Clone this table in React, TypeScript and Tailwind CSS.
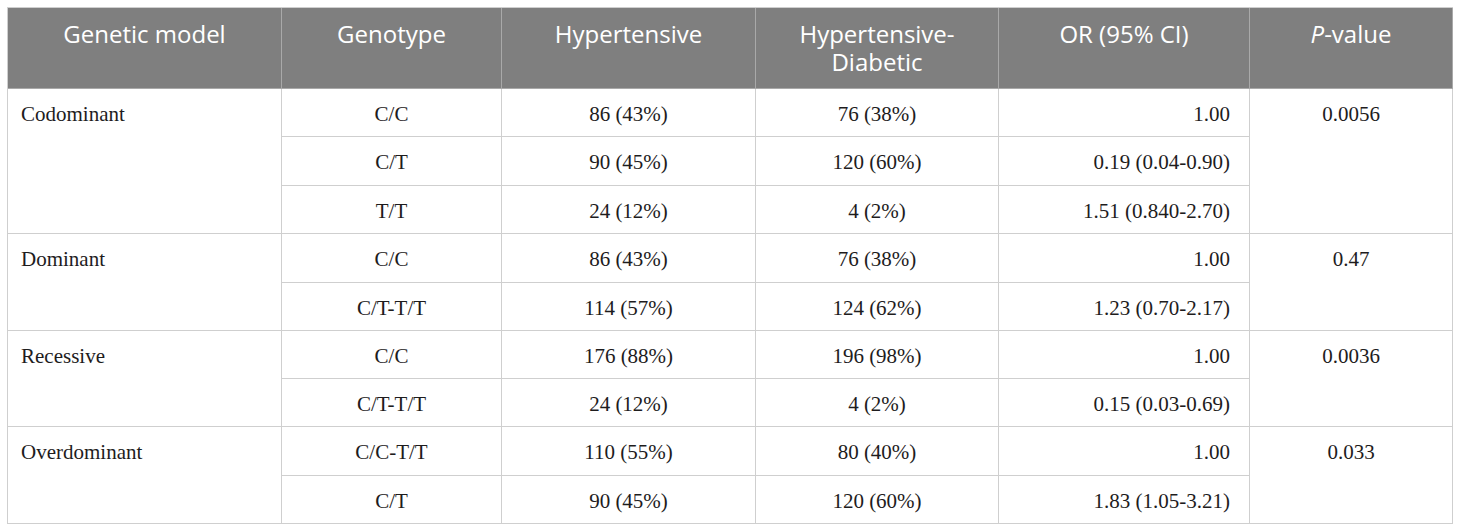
import React from "react";

type Row = {
    model?: string;
    span?: number;
    genotype: string;
    hyp: string;
    hypDiab: string;
    or: string;
    p?: string;
    h: string;
};

const rows: Row[] = [
    { model: "Codominant", span: 3, genotype: "C/C", hyp: "86 (43%)", hypDiab: "76 (38%)", or: "1.00", p: "0.0056", h: "h-[48px]" },
    { genotype: "C/T", hyp: "90 (45%)", hypDiab: "120 (60%)", or: "0.19 (0.04-0.90)", h: "h-[49px]" },
    { genotype: "T/T", hyp: "24 (12%)", hypDiab: "4 (2%)", or: "1.51 (0.840-2.70)", h: "h-[48px]" },
    { model: "Dominant", span: 2, genotype: "C/C", hyp: "86 (43%)", hypDiab: "76 (38%)", or: "1.00", p: "0.47", h: "h-[49px]" },
    { genotype: "C/T-T/T", hyp: "114 (57%)", hypDiab: "124 (62%)", or: "1.23 (0.70-2.17)", h: "h-[48px]" },
    { model: "Recessive", span: 2, genotype: "C/C", hyp: "176 (88%)", hypDiab: "196 (98%)", or: "1.00", p: "0.0036", h: "h-[48px]" },
    { genotype: "C/T-T/T", hyp: "24 (12%)", hypDiab: "4 (2%)", or: "0.15 (0.03-0.69)", h: "h-[48px]" },
    { model: "Overdominant", span: 2, genotype: "C/C-T/T", hyp: "110 (55%)", hypDiab: "80 (40%)", or: "1.00", p: "0.033", h: "h-[49px]" },
    { genotype: "C/T", hyp: "90 (45%)", hypDiab: "120 (60%)", or: "1.83 (1.05-3.21)", h: "h-[48px]" },
];

const th = "border-r border-b border-[#a9a9a9] px-3 pt-[12px] align-top text-center font-normal";
const td = "border-r border-b border-[#cfcfcf] pt-[11px] align-top";

export default function App() {
    return (
        <div className="bg-white w-[1460px] h-[531px] pt-[7px] pl-[7px]">
            <table
                className="table-fixed border-separate border-spacing-0 border-l border-t border-[#cfcfcf] text-[21px] leading-[28px] text-[#1e1c1d]"
                style={{ fontFamily: "'Liberation Serif', serif" }}
            >
                <colgroup>
                    <col className="w-[274px]" />
                    <col className="w-[220px]" />
                    <col className="w-[254px]" />
                    <col className="w-[243px]" />
                    <col className="w-[251px]" />
                    <col className="w-[203px]" />
                </colgroup>
                <thead>
                    <tr className="h-[81px] bg-[#7f7f7f] text-white text-[24px] leading-[28px] font-['Open_Sans',sans-serif]">
                        <th className={th}>Genetic model</th>
                        <th className={th}>Genotype</th>
                        <th className={th}>Hypertensive</th>
                        <th className={th}>Hypertensive-Diabetic</th>
                        <th className={th}>OR (95% CI)</th>
                        <th className={th}>
                            <i>P</i>-value
                        </th>
                    </tr>
                </thead>
                <tbody>
                    {rows.map((r, i) => (
                        <tr key={i} className={r.h}>
                            {r.model && (
                                <td rowSpan={r.span} className={`${td} pl-[13px] text-left`}>
                                    {r.model}
                                </td>
                            )}
                            <td className={`${td} text-center`}>{r.genotype}</td>
                            <td className={`${td} text-center`}>{r.hyp}</td>
                            <td className={`${td} text-center`}>{r.hypDiab}</td>
                            <td className={`${td} pr-[19px] text-right`}>{r.or}</td>
                            {r.p && (
                                <td rowSpan={r.span} className={`${td} text-center`}>
                                    {r.p}
                                </td>
                            )}
                        </tr>
                    ))}
                </tbody>
            </table>
        </div>
    );
}
